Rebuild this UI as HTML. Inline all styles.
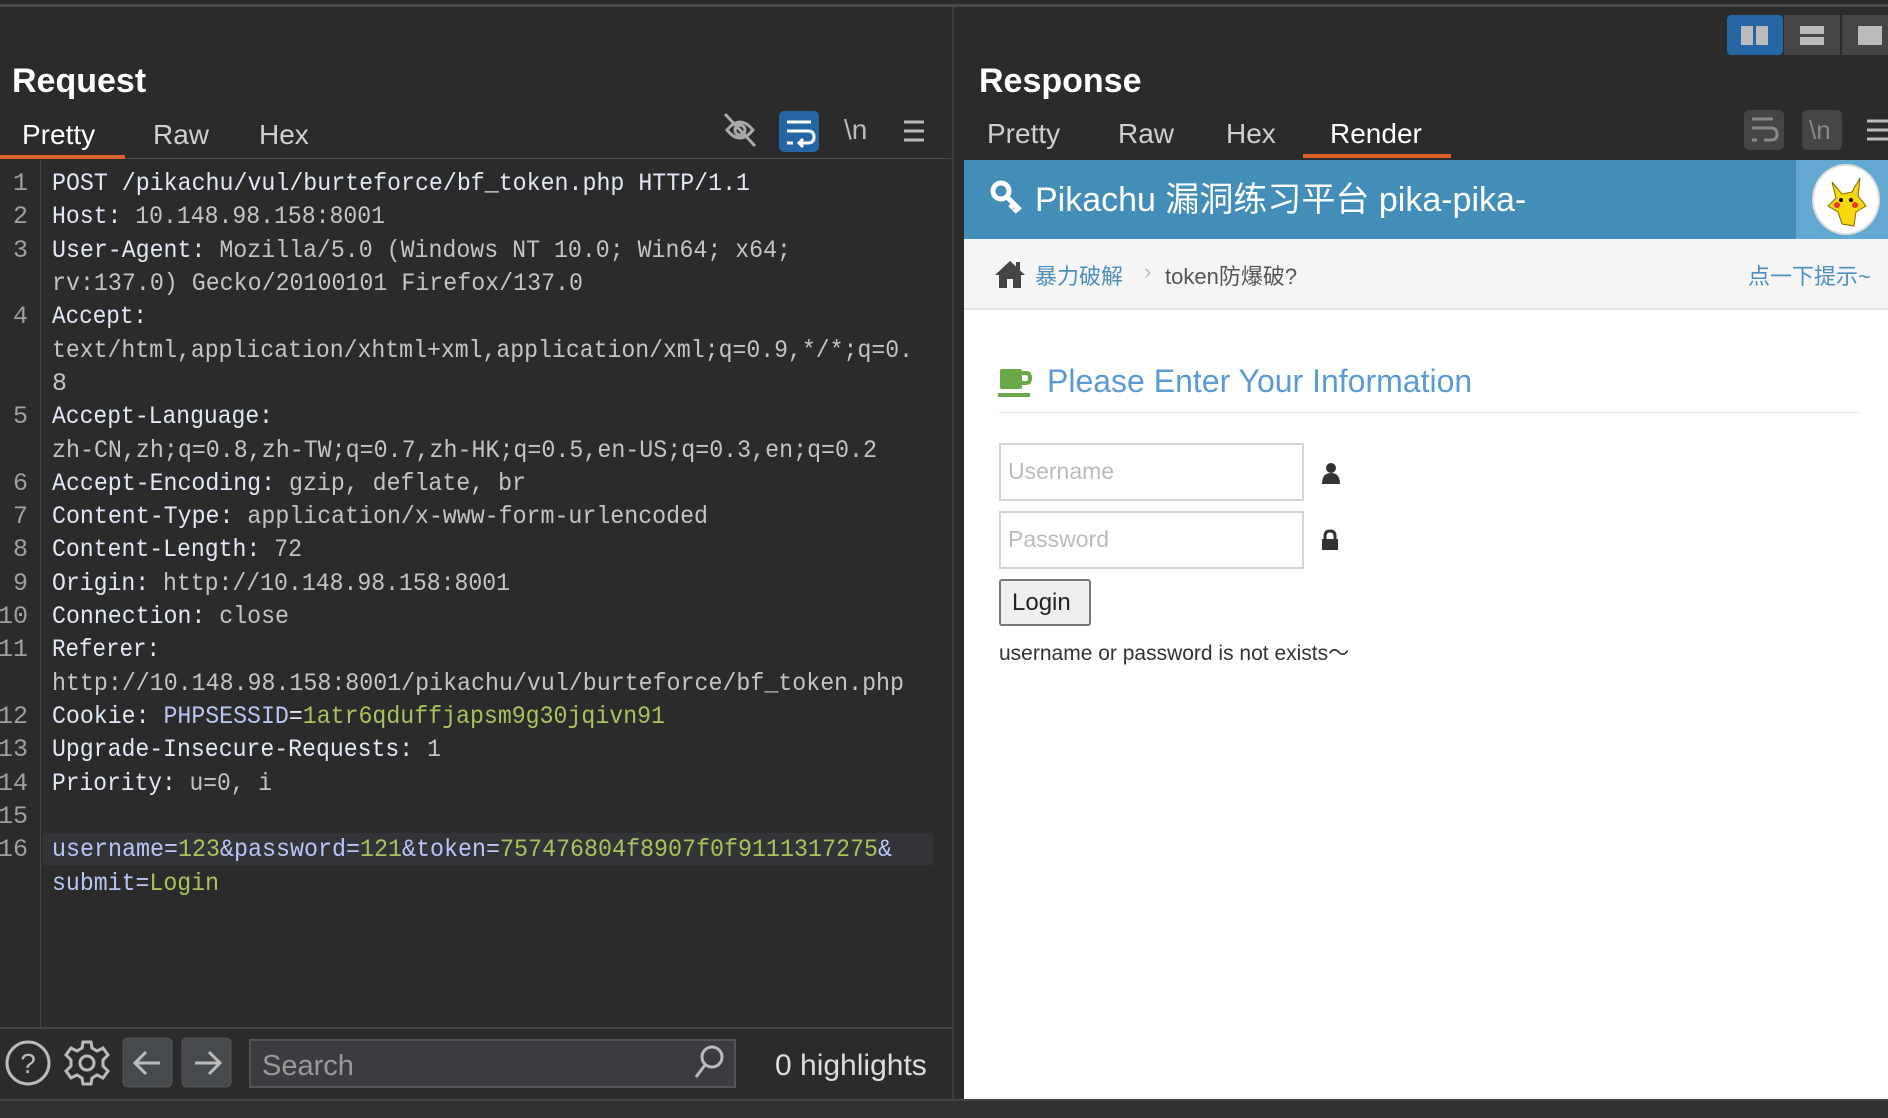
<!DOCTYPE html>
<html><head><meta charset="utf-8"><style>
*{margin:0;padding:0;box-sizing:border-box}
body{width:1888px;height:1118px;background:#2b2b2b;position:relative;overflow:hidden;font-family:"Liberation Sans","Noto Sans CJK SC",sans-serif;color:#e8e8e8}
.a{position:absolute}
.title{font-weight:bold;font-size:34px;color:#fff}
.tab{font-size:28px;color:#cfcfcf}
</style></head><body>
<div class="a" style="left:0;top:4px;width:1888px;height:3px;background:#4a4a4a"></div>
<div class="a" style="left:952px;top:7px;width:2px;height:1093px;background:#3e3e3e"></div>

<!-- Left pane -->
<div class="a title" style="left:12px;top:62px">Request</div>
<div class="a tab" style="left:22px;top:119px;color:#fff">Pretty</div>
<div class="a tab" style="left:153px;top:119px">Raw</div>
<div class="a tab" style="left:259px;top:119px">Hex</div>
<div class="a" style="left:0;top:155px;width:125px;height:4px;background:#d9622b"></div>
<div class="a" style="left:125px;top:158px;width:826px;height:1px;background:#4a4a4a"></div>
<svg class="a" style="left:720px;top:108px" width="230" height="48">
 <g fill="none" stroke="#aaa" stroke-width="3">
  <path d="M7 22 Q20 6 33 22 Q20 38 7 22Z"/><circle cx="20" cy="22" r="5"/><path d="M5 6 L35 38"/>
 </g>
 <rect x="59" y="3" width="40" height="41" rx="5" fill="#2566a4"/>
 <g stroke="#fff" stroke-width="3" fill="none"><path d="M67 14H91M67 23H88Q94 23 94 29Q94 35 88 35H80"/><path d="M67 35H73"/><path d="M83 31L79 35L83 39"/></g>
 <text x="124" y="31" font-size="28" fill="#bbb" font-family="Liberation Sans">\n</text>
 <g stroke="#bbb" stroke-width="3"><path d="M184 14H204M184 23H204M184 32H204"/></g>
</svg>

<div class="a" style="left:40px;top:160px;width:1px;height:867px;background:#454545"></div>
<div class="a" style="left:43px;top:833px;width:890px;height:32px;background:#323437"></div>
<svg class="a" style="left:0;top:0" width="952" height="1027" font-family="Liberation Mono,monospace" font-size="25">
<g fill="#a0a0a0" text-anchor="end">
<text x="28" y="190">1</text><text x="28" y="223">2</text><text x="28" y="257">3</text><text x="28" y="323">4</text><text x="28" y="423">5</text><text x="28" y="490">6</text><text x="28" y="523">7</text><text x="28" y="556">8</text><text x="28" y="590">9</text><text x="28" y="623">10</text><text x="28" y="656">11</text><text x="28" y="723">12</text><text x="28" y="756">13</text><text x="28" y="790">14</text><text x="28" y="823">15</text><text x="28" y="856">16</text>
</g>
<g fill="#e2e8f5">
<text x="52" y="190" textLength="698" lengthAdjust="spacingAndGlyphs">POST /pikachu/vul/burteforce/bf_token.php HTTP/1.1</text>
<text x="52" y="223" textLength="333" lengthAdjust="spacingAndGlyphs">Host: <tspan fill="#c4c4c4">10.148.98.158:8001</tspan></text>
<text x="52" y="257" textLength="739" lengthAdjust="spacingAndGlyphs">User-Agent: <tspan fill="#c4c4c4">Mozilla/5.0 (Windows NT 10.0; Win64; x64;</tspan></text>
<text x="52" y="290" textLength="531" lengthAdjust="spacingAndGlyphs" fill="#c4c4c4">rv:137.0) Gecko/20100101 Firefox/137.0</text>
<text x="52" y="323" textLength="95" lengthAdjust="spacingAndGlyphs">Accept:</text>
<text x="52" y="357" textLength="861" lengthAdjust="spacingAndGlyphs" fill="#c4c4c4">text/html,application/xhtml+xml,application/xml;q=0.9,*/*;q=0.</text>
<text x="52" y="390" fill="#c4c4c4">8</text>
<text x="52" y="423" textLength="221" lengthAdjust="spacingAndGlyphs">Accept-Language:</text>
<text x="52" y="457" textLength="825" lengthAdjust="spacingAndGlyphs" fill="#c4c4c4">zh-CN,zh;q=0.8,zh-TW;q=0.7,zh-HK;q=0.5,en-US;q=0.3,en;q=0.2</text>
<text x="52" y="490" textLength="474" lengthAdjust="spacingAndGlyphs">Accept-Encoding: <tspan fill="#c4c4c4">gzip, deflate, br</tspan></text>
<text x="52" y="523" textLength="656" lengthAdjust="spacingAndGlyphs">Content-Type: <tspan fill="#c4c4c4">application/x-www-form-urlencoded</tspan></text>
<text x="52" y="556" textLength="250" lengthAdjust="spacingAndGlyphs">Content-Length: <tspan fill="#c4c4c4">72</tspan></text>
<text x="52" y="590" textLength="458" lengthAdjust="spacingAndGlyphs">Origin: <tspan fill="#c4c4c4">http://10.148.98.158:8001</tspan></text>
<text x="52" y="623" textLength="237" lengthAdjust="spacingAndGlyphs">Connection: <tspan fill="#c4c4c4">close</tspan></text>
<text x="52" y="656" textLength="108" lengthAdjust="spacingAndGlyphs">Referer:</text>
<text x="52" y="690" textLength="852" lengthAdjust="spacingAndGlyphs" fill="#c4c4c4">http://10.148.98.158:8001/pikachu/vul/burteforce/bf_token.php</text>
<text x="52" y="723" textLength="613" lengthAdjust="spacingAndGlyphs">Cookie: <tspan fill="#b9c6f5">PHPSESSID</tspan>=<tspan fill="#a8c35c">1atr6qduffjapsm9g30jqivn91</tspan></text>
<text x="52" y="756" textLength="389" lengthAdjust="spacingAndGlyphs">Upgrade-Insecure-Requests: <tspan fill="#c4c4c4">1</tspan></text>
<text x="52" y="790" textLength="220" lengthAdjust="spacingAndGlyphs">Priority: <tspan fill="#c4c4c4">u=0, i</tspan></text>
<text x="52" y="856" textLength="840" lengthAdjust="spacingAndGlyphs" fill="#b9c6f5">username=<tspan fill="#a8c35c">123</tspan>&amp;password=<tspan fill="#a8c35c">121</tspan>&amp;token=<tspan fill="#a8c35c">757476804f8907f0f9111317275</tspan>&amp;</text>
<text x="52" y="890" textLength="167" lengthAdjust="spacingAndGlyphs" fill="#b9c6f5">submit=<tspan fill="#a8c35c">Login</tspan></text>
</g>
</svg>

<!-- bottom bar -->
<div class="a" style="left:0;top:1027px;width:952px;height:2px;background:#454545"></div>
<svg class="a" style="left:0;top:1030px" width="952" height="70">
 <circle cx="28" cy="33" r="21" fill="none" stroke="#bbb" stroke-width="3"/>
 <text x="28" y="43" text-anchor="middle" font-size="28" fill="#bbb" font-family="Liberation Sans">?</text>
 <g transform="translate(87,33)" fill="none" stroke="#bbb" stroke-width="3">
  <path d="M-4 -21H4L5 -15L10 -12L16 -15L21 -8L16 -3V3L21 8L16 15L10 12L5 15L4 21H-4L-5 15L-10 12L-16 15L-21 8L-16 3V-3L-21 -8L-16 -15L-10 -12L-5 -15Z"/>
  <circle r="7"/>
 </g>
 <rect x="123" y="8" width="49" height="49" rx="5" fill="#474a4d" stroke="#555"/>
 <rect x="182" y="8" width="49" height="49" rx="5" fill="#474a4d" stroke="#555"/>
 <g fill="none" stroke="#bbb" stroke-width="3"><path d="M160 33H136M146 22L135 33L146 44"/><path d="M195 33H219M209 22L220 33L209 44"/></g>
 <rect x="250" y="10" width="485" height="47" fill="#3a3c3f" stroke="#555" stroke-width="2"/>
 <text x="262" y="45" font-size="29" fill="#999" font-family="Liberation Sans">Search</text>
 <circle cx="712" cy="27" r="10" fill="none" stroke="#bbb" stroke-width="3"/><path d="M705 35L696 47" stroke="#bbb" stroke-width="3"/>
 <text x="775" y="45" font-size="30" fill="#ddd" font-family="Liberation Sans">0 highlights</text>
</svg>
<div class="a" style="left:0;top:1099px;width:1888px;height:19px;background:#313131;border-top:2px solid #444"></div>

<!-- Right pane -->
<div class="a title" style="left:979px;top:62px">Response</div>
<div class="a tab" style="left:987px;top:118px">Pretty</div>
<div class="a tab" style="left:1118px;top:118px">Raw</div>
<div class="a tab" style="left:1226px;top:118px">Hex</div>
<div class="a tab" style="left:1330px;top:118px;color:#fff">Render</div>
<div class="a" style="left:1303px;top:154px;width:148px;height:4px;background:#d9622b"></div>
<svg class="a" style="left:1727px;top:15px" width="161" height="140">
 <rect x="0" y="0" width="56" height="40" rx="4" fill="#2566a4"/>
 <rect x="14" y="11" width="12" height="19" fill="#bbb"/><rect x="29" y="11" width="12" height="19" fill="#bbb"/>
 <rect x="57" y="0" width="56" height="40" fill="#454545"/>
 <rect x="73" y="11" width="24" height="8" fill="#bbb"/><rect x="73" y="22" width="24" height="8" fill="#bbb"/>
 <rect x="115" y="0" width="50" height="40" fill="#454545"/>
 <rect x="131" y="11" width="24" height="19" fill="#bbb"/>
 <rect x="17" y="95" width="40" height="40" rx="5" fill="#454545"/>
 <g stroke="#888" stroke-width="3" fill="none"><path d="M25 104H46M25 113H44Q50 113 50 119Q50 125 44 125H37"/><path d="M25 125H30"/></g>
 <rect x="75" y="95" width="40" height="40" rx="5" fill="#454545"/>
 <text x="82" y="124" font-size="26" fill="#888" font-family="Liberation Sans">\n</text>
 <g stroke="#bbb" stroke-width="3"><path d="M140 106H161M140 115H161M140 124H161"/></g>
</svg>

<!-- render -->
<div class="a" style="left:964px;top:160px;width:924px;height:939px;background:#fff">
 <div class="a" style="left:0;top:0;width:924px;height:79px;background:#438eb9"></div>
 <div class="a" style="left:832px;top:0;width:92px;height:79px;background:#62a8d1"></div>
 <div class="a" style="left:848px;top:4px;width:68px;height:71px;border-radius:50%;background:#fff;border:2px solid #ddd"></div>
 <svg class="a" style="left:858px;top:12px" width="50" height="58"><path d="M10 10L20 22L30 20L38 6L36 24L44 34L34 40L32 54L20 52L16 40L6 34L14 26Z" fill="#f5d90f" stroke="#8a6d00" stroke-width="1"/><circle cx="19" cy="28" r="2" fill="#000"/><circle cx="29" cy="28" r="2" fill="#000"/><circle cx="15" cy="33" r="3" fill="#e33"/><circle cx="33" cy="33" r="3" fill="#e33"/></svg>
 <svg class="a" style="left:26px;top:20px" width="34" height="34"><circle cx="11" cy="11" r="8" fill="none" stroke="#fff" stroke-width="5"/><path d="M16 16L30 30M24 24L20 28M28 28L24 32" stroke="#fff" stroke-width="5"/></svg>
 <div class="a" style="left:71px;top:12px;font-size:34px;color:#fff;font-family:'Liberation Sans','Noto Sans CJK SC',sans-serif">Pikachu 漏洞练习平台 pika-pika-</div>
 <div class="a" style="left:0;top:79px;width:924px;height:71px;background:#f5f5f5;border-bottom:2px solid #e5e5e5"></div>
 <svg class="a" style="left:30px;top:99px" width="32" height="30"><path d="M16 2L1 16H5V29H13V20H19V29H27V16H31Z" fill="#444"/><rect x="22" y="3" width="4" height="8" fill="#444"/></svg>
 <div class="a" style="left:71px;top:99px;font-size:22px;color:#4c8fbd">暴力破解</div>
 <div class="a" style="left:180px;top:99px;font-size:22px;color:#bbb">›</div>
 <div class="a" style="left:201px;top:99px;font-size:22px;color:#555">token防爆破?</div>
 <div class="a" style="left:784px;top:99px;font-size:22px;color:#4c8fbd">点一下提示~</div>
 <svg class="a" style="left:34px;top:207px" width="36" height="34"><rect x="2" y="2" width="22" height="20" rx="2" fill="#69aa46"/><path d="M24 6H28Q32 6 32 11Q32 16 28 16H24" fill="none" stroke="#69aa46" stroke-width="4"/><rect x="0" y="26" width="32" height="4" fill="#69aa46"/></svg>
 <div class="a" style="left:83px;top:203px;font-size:32px;color:#5a9bd5">Please Enter Your Information</div>
 <div class="a" style="left:35px;top:252px;width:861px;height:1px;background:#dce8f1"></div>
 <div class="a" style="left:35px;top:283px;width:305px;height:58px;border:2px solid #d5d5d5;font-size:23px;color:#bbb;padding:13px 7px">Username</div>
 <svg class="a" style="left:357px;top:302px" width="20" height="22"><circle cx="10" cy="6" r="5" fill="#333"/><path d="M1 22Q1 11 10 11Q19 11 19 22Z" fill="#333"/></svg>
 <div class="a" style="left:35px;top:351px;width:305px;height:58px;border:2px solid #d5d5d5;font-size:23px;color:#bbb;padding:13px 7px">Password</div>
 <svg class="a" style="left:357px;top:369px" width="18" height="22"><path d="M4 10V7Q4 2 9 2Q14 2 14 7V10" fill="none" stroke="#333" stroke-width="3"/><rect x="1" y="10" width="16" height="11" fill="#333"/></svg>
 <div class="a" style="left:35px;top:419px;width:92px;height:47px;border:2px solid #777;border-radius:3px;background:#efefef;font-size:24px;color:#222;padding:8px 11px">Login</div>
 <div class="a" style="left:35px;top:477px;font-size:21px;color:#333">username or password is not exists～</div>
</div>
</body></html>
